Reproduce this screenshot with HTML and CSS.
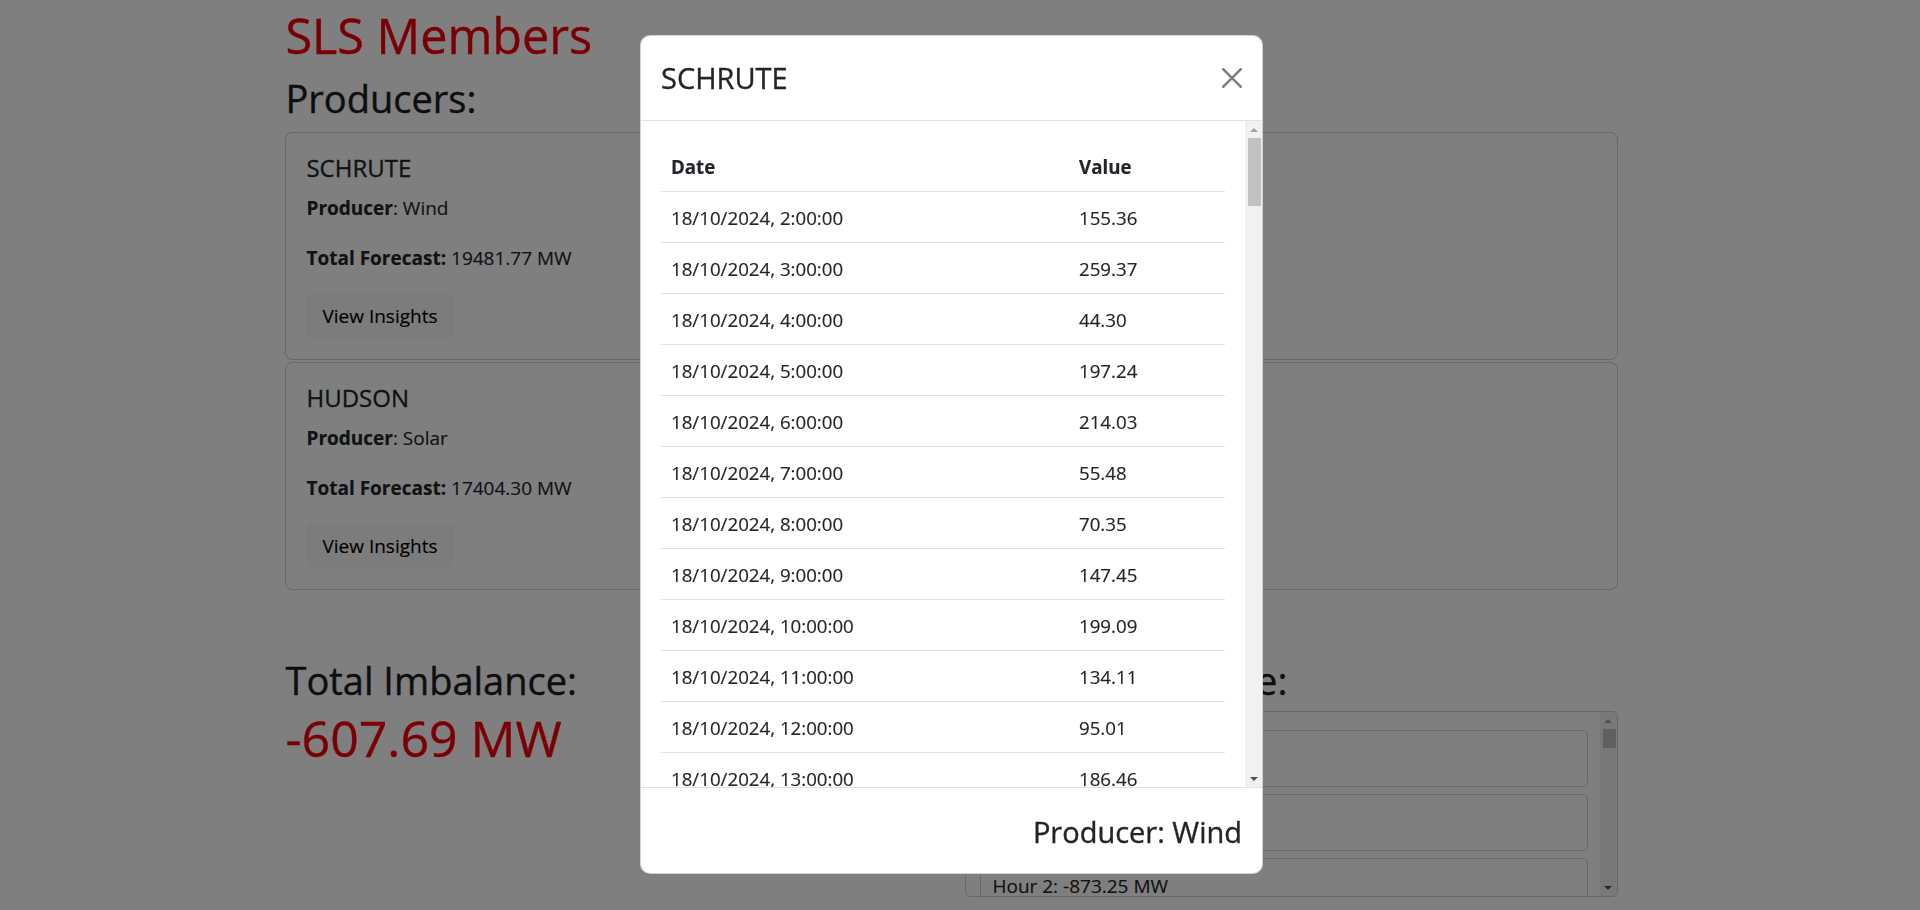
FILE: index.html
```html
<!DOCTYPE html>
<html lang="en">
<head>
<meta charset="utf-8">
<title>SLS Members</title>
<link rel="stylesheet" href="styles.css">
</head>
<body>
<div class="page">
  <h1 class="page-title">SLS Members</h1>
  <h2 class="section-title producers-title">Producers:</h2>

  <div class="card">
    <h5 class="card-title">SCHRUTE</h5>
    <p class="card-line"><strong>Producer</strong>: Wind</p>
    <p class="card-line last"><strong>Total Forecast:</strong> 19481.77 MW</p>
    <button class="btn-light" type="button">View Insights</button>
  </div>

  <div class="card">
    <h5 class="card-title">HUDSON</h5>
    <p class="card-line"><strong>Producer</strong>: Solar</p>
    <p class="card-line last"><strong>Total Forecast:</strong> 17404.30 MW</p>
    <button class="btn-light" type="button">View Insights</button>
  </div>

  <div class="summary">
    <div class="summary-col">
      <h2 class="section-title total-title">Total Imbalance:</h2>
      <div class="imbalance">-607.69 MW</div>
    </div>
    <div class="summary-col">
      <h2 class="section-title hourly-title">Hourly Imbalance:</h2>
      <div class="hours">
        <div class="hours-list">
          <div class="hour-item">Hour 0: -912.40 MW</div>
          <div class="hour-item">Hour 1: -868.17 MW</div>
          <div class="hour-item">Hour 2: -873.25 MW</div>
          <div class="hour-item">Hour 3: -641.08 MW</div>
        </div>
        <div class="scrollbar">
          <div class="sb-btn"><span class="tri-up"></span></div>
          <div class="sb-track"><div class="sb-thumb small"></div></div>
          <div class="sb-btn"><span class="tri-down"></span></div>
        </div>
      </div>
    </div>
  </div>
</div>

<div class="backdrop"></div>

<div class="modal">
  <div class="modal-content">
    <div class="modal-header">
      <div class="modal-title">SCHRUTE</div>
      <button class="btn-close" type="button" aria-label="Close">
        <svg viewBox="0 0 16 16" width="20" height="20"><path d="M.293.293a1 1 0 0 1 1.414 0L8 6.586 14.293.293a1 1 0 1 1 1.414 1.414L9.414 8l6.293 6.293a1 1 0 0 1-1.414 1.414L8 9.414l-6.293 6.293a1 1 0 0 1-1.414-1.414L6.586 8 .293 1.707a1 1 0 0 1 0-1.414z"/></svg>
      </button>
    </div>
    <div class="modal-body">
      <div class="modal-scroll">
        <table class="data-table">
          <thead>
            <tr><th class="col-date">Date</th><th>Value</th></tr>
          </thead>
          <tbody>
            <tr><td>18/10/2024, 2:00:00</td><td>155.36</td></tr>
            <tr><td>18/10/2024, 3:00:00</td><td>259.37</td></tr>
            <tr><td>18/10/2024, 4:00:00</td><td>44.30</td></tr>
            <tr><td>18/10/2024, 5:00:00</td><td>197.24</td></tr>
            <tr><td>18/10/2024, 6:00:00</td><td>214.03</td></tr>
            <tr><td>18/10/2024, 7:00:00</td><td>55.48</td></tr>
            <tr><td>18/10/2024, 8:00:00</td><td>70.35</td></tr>
            <tr><td>18/10/2024, 9:00:00</td><td>147.45</td></tr>
            <tr><td>18/10/2024, 10:00:00</td><td>199.09</td></tr>
            <tr><td>18/10/2024, 11:00:00</td><td>134.11</td></tr>
            <tr><td>18/10/2024, 12:00:00</td><td>95.01</td></tr>
            <tr><td>18/10/2024, 13:00:00</td><td>186.46</td></tr>
          </tbody>
        </table>
      </div>
      <div class="scrollbar">
        <div class="sb-btn"><span class="tri-up"></span></div>
        <div class="sb-track"><div class="sb-thumb"></div></div>
        <div class="sb-btn"><span class="tri-down"></span></div>
      </div>
    </div>
    <div class="modal-footer">
      <div class="footer-text">Producer: Wind</div>
    </div>
  </div>
</div>
</body>
</html>
```

FILE: styles.css
```css
* { box-sizing: border-box; }

html, body {
  margin: 0;
  height: 100%;
}

body {
  font-family: "Open Sans", "Noto Sans", sans-serif;
  font-size: 19px;
  line-height: 30px;
  color: #212529;
  background: #fff;
  padding-right: 17px;
  overflow: hidden;
  -webkit-text-stroke: 0.15px currentColor;
}

.page {
  width: 70%;
  margin: 0 auto;
  padding-top: 5px;
}

.page-title {
  margin: 0 0 9px;
  font-size: 48.5px;
  line-height: 60px;
  font-weight: 400;
  color: #f5000c;
  -webkit-text-stroke: 0.4px currentColor;
}

.section-title {
  margin: 0 0 10px;
  font-size: 38px;
  line-height: 48px;
  font-weight: 400;
  color: #1a1d20;
  -webkit-text-stroke: 0.4px currentColor;
}

.producers-title { margin-bottom: 10px; }
.total-title { margin-bottom: 4px; }
.hourly-title { margin-bottom: 7px; }

.card {
  border: 1px solid rgba(0, 0, 0, 0.175);
  border-radius: 7.5px;
  padding: 20px;
  margin-bottom: 2px;
  background: #fff;
}

.card-title {
  margin: 0 0 10px;
  font-size: 24px;
  line-height: 30px;
  font-weight: 400;
  -webkit-text-stroke: 0.3px currentColor;
}

.card-line { margin: 0 0 20px; }
.card-line.last { margin-bottom: 20px; }

strong { font-weight: 700; }

.btn-light {
  display: block;
  font-family: inherit;
  font-size: 19px;
  line-height: 30px;
  padding: 7px 15px;
  border: 1px solid #f8f9fa;
  background: #f8f9fa;
  border-radius: 7.5px;
  color: #000;
}

.summary {
  display: grid;
  grid-template-columns: 680px 1fr;
  margin-top: 66px;
}

.imbalance {
  font-size: 50px;
  line-height: 60px;
  font-weight: 400;
  color: #f5000c;
  -webkit-text-stroke: 0.4px currentColor;
}

.hours {
  display: flex;
  height: 186px;
  border: 1px solid rgba(0, 0, 0, 0.175);
  border-radius: 5px;
  overflow: hidden;
}

.hours-list {
  flex: 1;
  padding: 18px 12px 0 14px;
  overflow: hidden;
}

.hour-item {
  border: 1px solid rgba(0, 0, 0, 0.175);
  border-radius: 5px;
  padding: 12px 11px 13px;
  margin-bottom: 7px;
}

.scrollbar {
  width: 17px;
  flex-shrink: 0;
  background: #f1f1f1;
  display: flex;
  flex-direction: column;
}

.sb-btn {
  height: 17px;
  flex-shrink: 0;
  display: flex;
  align-items: center;
  justify-content: center;
}

.tri-up {
  width: 0;
  height: 0;
  border-left: 4px solid transparent;
  border-right: 4px solid transparent;
  border-bottom: 4px solid #a3a3a3;
}

.tri-down {
  width: 0;
  height: 0;
  border-left: 4px solid transparent;
  border-right: 4px solid transparent;
  border-top: 4px solid #505050;
}

.sb-track {
  flex: 1;
  padding: 0 1px 0 3px;
}

.sb-thumb {
  height: 68px;
  background: #c1c1c1;
}

.sb-thumb.small { height: 19px; }

.backdrop {
  position: fixed;
  inset: 0;
  background: rgba(0, 0, 0, 0.5);
}

.modal {
  position: fixed;
  inset: 0;
  padding: 35px 17px 0 0;
  display: flex;
  justify-content: center;
  align-items: flex-start;
}

.modal-content {
  width: 623px;
  height: 839px;
  display: flex;
  flex-direction: column;
  background: #fff;
  border: 1px solid rgba(0, 0, 0, 0.175);
  border-radius: 10px;
  overflow: hidden;
}

.modal-header {
  flex-shrink: 0;
  display: flex;
  align-items: center;
  justify-content: space-between;
  padding: 20px;
  border-bottom: 1px solid #dee2e6;
}

.modal-title {
  font-size: 29px;
  line-height: 44px;
  -webkit-text-stroke: 0.35px currentColor;
}

.btn-close {
  width: 30px;
  height: 30px;
  padding: 5px;
  margin-right: -5px;
  border: 0;
  background: transparent;
  opacity: 0.5;
  display: flex;
}

.btn-close svg { fill: #000; }

.modal-body {
  flex: 1;
  min-height: 0;
  display: flex;
  overflow: hidden;
}

.modal-scroll {
  flex: 1;
  padding: 20px;
  overflow: hidden;
}

.data-table {
  width: 100%;
  border-collapse: collapse;
  font-size: 18.7px;
  line-height: 30px;
}

.data-table th,
.data-table td {
  padding: 11px 10px 9px;
  text-align: left;
  border-bottom: 1px solid #dee2e6;
  white-space: nowrap;
}

.data-table th { font-weight: 700; }

.col-date { width: 408px; }

.modal-footer {
  flex-shrink: 0;
  display: flex;
  justify-content: flex-end;
  padding: 22px 20px 19px;
  border-top: 1px solid #dee2e6;
}

.footer-text {
  font-size: 29px;
  line-height: 44px;
  -webkit-text-stroke: 0.35px currentColor;
}
```
